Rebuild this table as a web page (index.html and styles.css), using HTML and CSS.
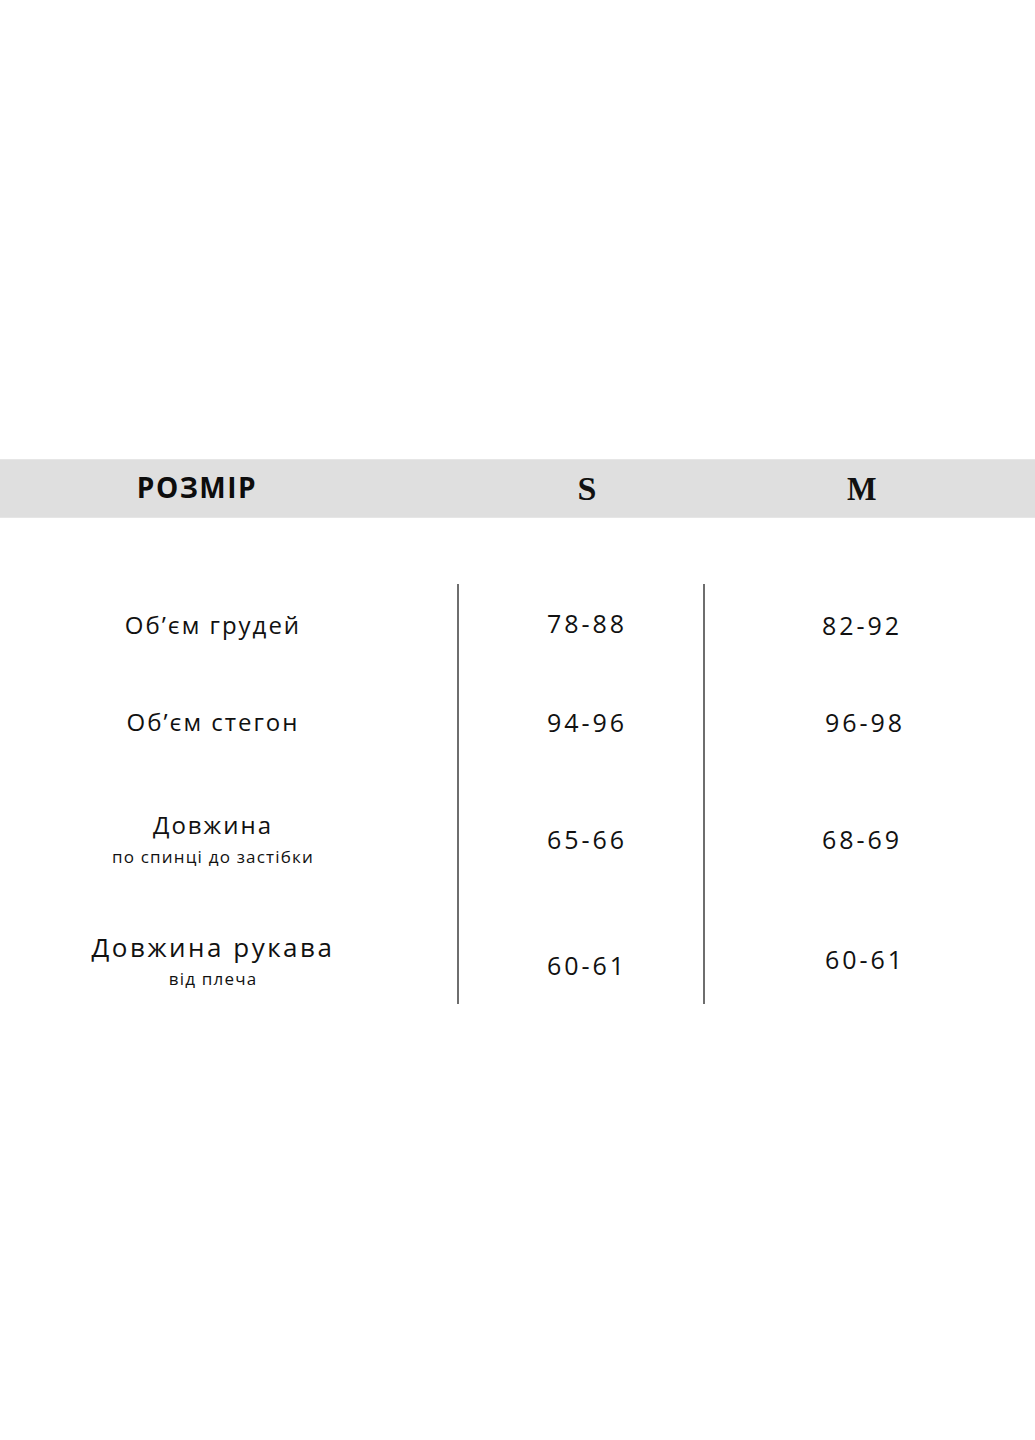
FILE: index.html
```html
<!DOCTYPE html>
<html lang="uk">
<head>
<meta charset="utf-8">
<title>Розмірна сітка</title>
<link rel="stylesheet" href="styles.css">
</head>
<body>
<div class="page">
  <div class="head">
    <div class="head-label">РОЗМІР</div>
    <div class="head-s">S</div>
    <div class="head-m">M</div>
  </div>
  <div class="body">
    <div class="row row-1">
      <div class="cell label"><div class="main">Об’єм грудей</div></div>
      <div class="cell val-s"><span class="num up">78-88</span></div>
      <div class="cell val-m"><span class="num">82-92</span></div>
    </div>
    <div class="row row-2">
      <div class="cell label"><div class="main">Об’єм стегон</div></div>
      <div class="cell val-s"><span class="num">94-96</span></div>
      <div class="cell val-m"><span class="num shift-r">96-98</span></div>
    </div>
    <div class="row row-3">
      <div class="cell label">
        <div class="main">Довжина</div>
        <div class="sub">по спинці до застібки</div>
      </div>
      <div class="cell val-s"><span class="num">65-66</span></div>
      <div class="cell val-m"><span class="num">68-69</span></div>
    </div>
    <div class="row row-4">
      <div class="cell label">
        <div class="main main-lg">Довжина рукава</div>
        <div class="sub">від плеча</div>
      </div>
      <div class="cell val-s"><span class="num down">60-61</span></div>
      <div class="cell val-m"><span class="num shift-r up">60-61</span></div>
    </div>
  </div>
</div>
</body>
</html>
```

FILE: styles.css
```css
* { box-sizing: border-box; }
html, body { margin: 0; padding: 0; background: #ffffff; }
body {
  width: 1035px;
  min-height: 1440px;
  font-family: "Open Sans", "Noto Sans", sans-serif;
  color: #111111;
}
.page { padding-top: 459px; }

.head {
  display: grid;
  grid-template-columns: 457px 246px 1fr;
  height: 59px;
  background: #dfdfdf;
  border-top: 1px solid #e6e6e6;
  border-bottom: 1px solid #e6e6e6;
  align-items: center;
}
.head-label {
  font-family: "Open Sans", sans-serif;
  font-weight: 700;
  font-size: 28px;
  letter-spacing: 1.5px;
  text-align: center;
  padding-right: 63px;
  padding-bottom: 4px;
  color: #0d0d0d;
}
.head-s, .head-m {
  font-family: "Liberation Serif", "Times New Roman", serif;
  font-weight: 700;
  font-size: 34px;
  text-align: center;
  color: #111;
}
.head-s { padding-left: 14px; }
.head-m { padding-right: 16px; transform: scaleX(0.92); }

.body { margin-top: 66px; }
.row {
  display: grid;
  grid-template-columns: 457px 246px 1fr;
}
.row-1 { height: 82px; }
.row-2 { height: 112px; }
.row-3 { height: 122px; }
.row-4 { height: 104px; }
.row-4 .cell { padding-top: 18px; }

.cell {
  display: flex;
  flex-direction: column;
  align-items: center;
  justify-content: center;
}
.label { padding-right: 31px; text-align: center; }
.val-s { border-left: 2px solid #6e6e6e; padding-left: 12px; }
.val-m { border-left: 2px solid #6e6e6e; padding-right: 16px; }

.main {
  font-size: 24px;
  line-height: 32px;
  letter-spacing: 2px;
}
.main-lg {
  font-size: 26px;
  letter-spacing: 2.5px;
}
.sub {
  font-size: 17px;
  line-height: 24px;
  letter-spacing: 1.2px;
  margin-top: 4px;
}
.num {
  font-size: 25px;
  line-height: 34px;
  letter-spacing: 3px;
}
.shift-r { padding-left: 6px; }
.up { margin-bottom: 4px; }
.down { margin-top: 8px; }
```
